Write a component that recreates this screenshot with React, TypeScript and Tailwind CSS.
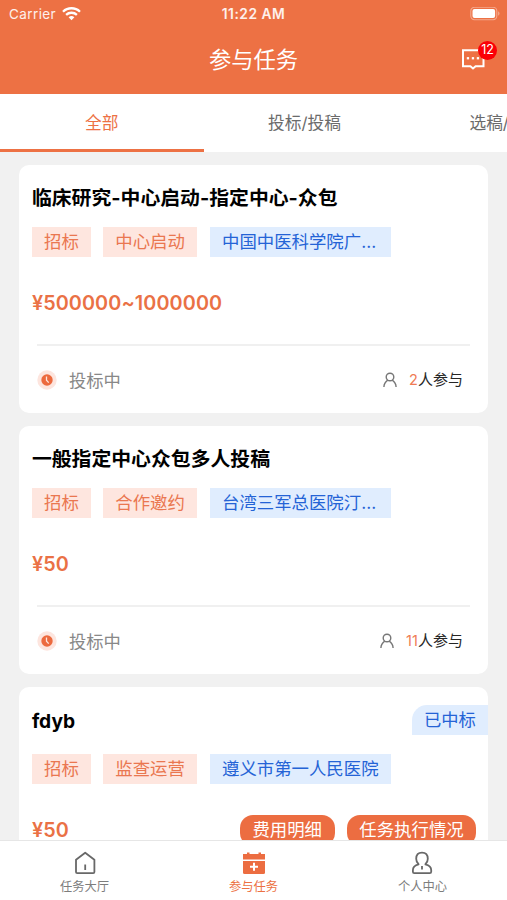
import React from "react";

type Task = {
  title: string;
  tags: string[];
  hospital: string;
  price: string;
  joined?: number;
  badge?: string;
  actions?: string[];
};

const TASKS: Task[] = [
  {
    title: "临床研究-中心启动-指定中心-众包",
    tags: ["招标", "中心启动"],
    hospital: "中国中医科学院广...",
    price: "¥500000~1000000",
    joined: 2,
  },
  {
    title: "一般指定中心众包多人投稿",
    tags: ["招标", "合作邀约"],
    hospital: "台湾三军总医院汀...",
    price: "¥50",
    joined: 11,
  },
  {
    title: "fdyb",
    tags: ["招标", "监查运营"],
    hospital: "遵义市第一人民医院",
    price: "¥50",
    badge: "已中标",
    actions: ["费用明细", "任务执行情况"],
  },
];

function StatusBar() {
  return (
    <div className="relative flex h-7 items-center justify-between pl-[9px] pr-[7px] text-[13.5px] text-white/90">
      <div className="flex items-center gap-[6px]">
        <span className="tracking-[0.4px]">Carrier</span>
        <svg width="19" height="14" viewBox="0 0 19 14" fill="none" stroke="white" strokeWidth="2.3">
          <path d="M1 4.7a12.2 12.2 0 0 1 17 0" />
          <path d="M4.1 7.9a7.8 7.8 0 0 1 10.8 0" />
          <path d="M9.5 13.2 6.6 10.3a4.2 4.2 0 0 1 5.8 0z" fill="white" stroke="none" />
        </svg>
      </div>
      <span className="absolute inset-x-0 text-center text-[13.8px] font-semibold tracking-[0.5px]">11:22 AM</span>
      <svg width="30" height="14" viewBox="0 0 30 14">
        <rect x="0.8" y="0.3" width="26" height="12.4" rx="3.6" fill="none" stroke="white" strokeOpacity="0.4" strokeWidth="1.1" />
        <rect x="2.5" y="2" width="22.6" height="9" rx="2" fill="white" />
        <path d="M28.3 4.3c1.5.7 1.5 3.7 0 4.4z" fill="white" fillOpacity="0.5" />
      </svg>
    </div>
  );
}

function Header() {
  return (
    <header className="h-[94px] shrink-0 bg-[#ed7144]">
      <StatusBar />
      <div className="relative flex h-16 items-center justify-center">
        <h1 className="pt-px text-[22.3px] leading-none text-white">参与任务</h1>
        <div className="absolute right-[22px] top-[20px]">
          <svg width="24" height="22" viewBox="0 0 24 22" fill="none" stroke="white" strokeWidth="2">
            <path d="M2 2.3H22.5V18.2H14.6L12 20.4L9.4 18.2H2Z" />
            <g fill="white" stroke="none">
              <rect x="5.8" y="9.1" width="2.3" height="2.3" />
              <rect x="10.8" y="9.1" width="2.3" height="2.3" />
              <rect x="15.8" y="9.1" width="2.3" height="2.3" />
            </g>
          </svg>
          <span className="absolute -right-[12px] -top-[7px] flex size-[19px] items-center justify-center rounded-full bg-[#fb0007] text-[12.5px] leading-none text-white">
            12
          </span>
        </div>
      </div>
    </header>
  );
}

function Tabs() {
  return (
    <div className="flex h-[58px] shrink-0 bg-white text-[16.7px] text-[#6b6b6b]">
      <div className="flex w-[203.5px] shrink-0 items-center justify-center border-b-[3px] border-[#ed7144] pt-[4px] text-[#ed7144]">全部</div>
      <div className="flex w-[203px] shrink-0 items-center justify-center pr-px pt-[2px]">投标/投稿</div>
      <div className="flex w-[203px] shrink-0 items-center pl-[63px] pt-[2px]">选稿/</div>
    </div>
  );
}

function ClockIcon() {
  return (
    <svg width="20" height="20" viewBox="0 0 20 20">
      <circle cx="10" cy="10" r="9.7" fill="#fde5de" />
      <circle cx="10" cy="10" r="5.7" fill="#ec6a3e" />
      <path d="M9.5 6.5V10.3L11.7 12.6" fill="none" stroke="#fde5de" strokeWidth="1.3" />
    </svg>
  );
}

function PersonIcon() {
  return (
    <svg width="14" height="16" viewBox="0 0 14 16" fill="none" stroke="#777" strokeWidth="1.4">
      <circle cx="7" cy="5" r="3.8" />
      <path d="M0.9 15C1.1 11.2 3 9.4 4.8 8.2M13.1 15C12.9 11.2 11 9.4 9.2 8.2" />
    </svg>
  );
}

function TaskCard({ task }: { task: Task }) {
  return (
    <section className="h-[248px] shrink-0 rounded-[10px] bg-white pl-[12.5px] pt-[18px]">
      <div className={`flex h-[30px] items-center justify-between ${task.badge ? "mb-[19px]" : "mb-[14.4px]"}`}>
        <h2 className={`font-bold leading-none text-black ${task.badge ? "pt-[4px] text-[19.2px]" : "pt-[2px] text-[19.85px]"}`}>{task.title}</h2>
        {task.badge && (
          <span className="flex h-[30px] items-center rounded-tl-[15px] bg-[#e0edfe] px-[12.5px] text-[17.3px] text-[#2463d6]">{task.badge}</span>
        )}
      </div>
      <div className="flex gap-3 text-[17.4px] leading-[30px]">
        {task.tags.map((tag) => (
          <span key={tag} className="h-[30px] bg-[#fee6df] px-[12.2px] text-[#ea7750]">{tag}</span>
        ))}
        <span className="ml-[0.5px] h-[30px] w-[181.5px] whitespace-nowrap bg-[#e0edfe] pl-[12.5px] text-[#2463d6]">{task.hospital}</span>
      </div>
      <div className="mt-[30px] flex h-[32px] items-center justify-between pr-3">
        <span className="pt-[2px] text-[19.8px] font-semibold leading-none tracking-[0.1px] text-[#ea7145]">{task.price}</span>
        {task.actions && (
          <div className="flex gap-3">
            {task.actions.map((label) => (
              <button key={label} className="h-[31px] rounded-[13px] bg-[#ec6d41] px-[12.7px] text-[17.4px] leading-[30px] text-white">{label}</button>
            ))}
          </div>
        )}
      </div>
      {task.joined && (
        <>
          <div className="ml-[5px] mr-[18.5px] mt-[24.6px] h-[2px] bg-[#f0f0f0]" />
          <div className="ml-[5px] mr-[25.5px] flex h-[68px] items-center">
            <ClockIcon />
            <span className="ml-[12px] pt-px text-[17.3px] text-[#888]">投标中</span>
            <span className="ml-auto flex items-center text-[15px] text-[#262626]">
              <PersonIcon />
              <span className="ml-[12.5px] text-[14.5px] text-[#ef7b54]">{task.joined}</span>
              人参与
            </span>
          </div>
        </>
      )}
    </section>
  );
}

function HomeIcon() {
  return (
    <svg width="22" height="24" viewBox="0 0 22 24" fill="none" stroke="#686868" strokeWidth="1.8" strokeLinejoin="round">
      <path d="M2 8.7L11.2 1.7L20.4 8.7V21Q20.4 22.2 19.2 22.2H3.2Q2 22.2 2 21Z" />
      <path d="M11.2 13.5V19" />
    </svg>
  );
}

function TaskIcon() {
  return (
    <svg width="22" height="24" viewBox="0 0 22 24" fill="#ec6d41">
      <path d="M0 3H4V1.5H6.5V3H15.5V1.5H18V3H22V8.5H0Z" />
      <path d="M0 10H22V21.5Q22 23 20.5 23H1.5Q0 23 0 21.5Z" />
      <path d="M11 11.7V19.7M7 15.7H15" stroke="white" strokeWidth="2" />
    </svg>
  );
}

function ProfileIcon() {
  return (
    <svg width="22" height="24" viewBox="0 0 22 24" fill="none" stroke="#686868" strokeWidth="1.8" strokeLinejoin="round">
      <path d="M6.6 13.3C4.8 11.8 4.2 9.8 4.2 7.800C4.2 4 6.400 1.700 10 1.700S15.800 4 15.800 7.800C15.800 9.800 15.200 11.800 13.400 13.300C17.300 14.300 19.200 16.200 19.200 19V20.700Q19.200 22.200 17.700 22.200H2.300Q0.900 22.200 0.900 20.700V19C0.900 16.200 2.700 14.300 6.600 13.300Z" />
      <path d="M10 15V18.500" />
    </svg>
  );
}

function BottomNav() {
  const items = [
    { label: "任务大厅", icon: <HomeIcon /> },
    { label: "参与任务", icon: <TaskIcon />, active: true },
    { label: "个人中心", icon: <ProfileIcon /> },
  ];
  return (
    <nav className="flex h-[60px] shrink-0 border-t border-[#e6e6e6] bg-white">
      {items.map((item) => (
        <div key={item.label} className={`flex flex-1 flex-col items-center pt-[10px] text-[12.3px] leading-[18px] ${item.active ? "text-[#ec7143]" : "text-[#7d7d7d]"}`}>
          {item.icon}
          <span className="mt-[3px]">{item.label}</span>
        </div>
      ))}
    </nav>
  );
}

export default function App() {
  return (
    <div className="flex h-[900px] w-[507px] flex-col overflow-hidden bg-[#f1f1f1] font-[Inter,'Noto_Sans_CJK_SC',sans-serif]">
      <Header />
      <Tabs />
      <main className="flex min-h-0 flex-1 flex-col gap-[13px] overflow-hidden pl-[19.4px] pr-[18.6px] pt-[13px]">
        {TASKS.map((task) => (
          <TaskCard key={task.title} task={task} />
        ))}
      </main>
      <BottomNav />
    </div>
  );
}
